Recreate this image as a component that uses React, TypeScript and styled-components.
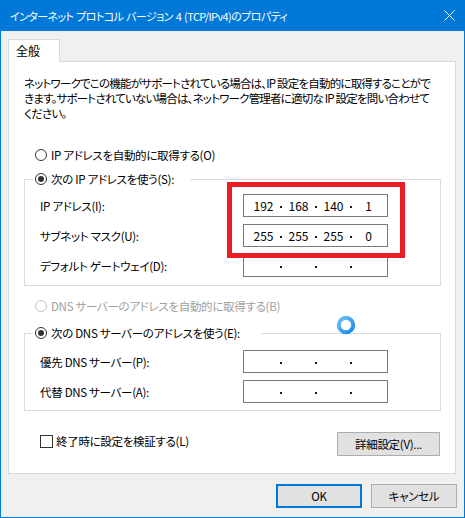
import React from "react";
import styled, { createGlobalStyle } from "styled-components";

const Global = createGlobalStyle`
  html, body { margin: 0; padding: 0; background: #ffffff; }
  body {
    font-family: "Noto Sans CJK JP", "Noto Sans", sans-serif;
    font-size: 11.5px;
    letter-spacing: -0.3px;
    font-feature-settings: "palt" 1;
    color: #000000;
  }
  * { box-sizing: border-box; }
`;

const Window = styled.div`
  width: 465px;
  height: 518px;
  background: #f0f0f0;
  border: 1px solid #0078d7;
  border-top: none;
  display: flex;
  flex-direction: column;
`;

const TitleBar = styled.div`
  height: 31px;
  flex: none;
  background: #0078d7;
  color: #ffffff;
  display: flex;
  align-items: center;
  padding-left: 9px;
`;

const Title = styled.div`
  font-size: 11px;
  letter-spacing: -0.6px;
  word-spacing: 1px;
  line-height: 16px;
  white-space: nowrap;
`;

const CloseButton = styled.div`
  margin-left: auto;
  width: 30px;
  height: 31px;
  display: flex;
  align-items: center;
  justify-content: center;
`;

const Body = styled.div`
  flex: 1;
  padding: 8px 7px 0 7px;
  display: flex;
  flex-direction: column;
`;

const TabStrip = styled.div`
  display: flex;
  height: 22px;
`;

const Tab = styled.div`
  width: 52px;
  height: 23px;
  background: #ffffff;
  border: 1px solid #d9d9d9;
  border-bottom: none;
  padding-left: 7px;
  font-size: 12px;
  letter-spacing: 0;
  line-height: 21px;
  position: relative;
  z-index: 1;
`;

const Panel = styled.div`
  position: relative;
  width: 448px;
  height: 413px;
  background: #ffffff;
  border: 1px solid #d9d9d9;
  padding: 14px 14px 0 15px;
  display: flex;
  flex-direction: column;
`;

const Intro = styled.div`
  line-height: 15px;
  letter-spacing: -0.8px;
  white-space: nowrap;
`;

const Line = styled.span`
  display: block;
`;

const RadioRow = styled.div<{ $top: number; $disabled?: boolean }>`
  display: flex;
  align-items: center;
  gap: 4px;
  height: 16px;
  margin-top: ${(p) => p.$top}px;
  padding-left: 11px;
  color: ${(p) => (p.$disabled ? "#a0a0a0" : "#000000")};
  white-space: nowrap;
`;

const Radio = styled.span<{ $checked?: boolean; $disabled?: boolean }>`
  width: 12px;
  height: 12px;
  flex: none;
  border-radius: 50%;
  border: 1px solid ${(p) => (p.$disabled ? "#c4c4c4" : "#333333")};
  background: #ffffff;
  display: flex;
  align-items: center;
  justify-content: center;
  &::after {
    content: "";
    display: ${(p) => (p.$checked ? "block" : "none")};
    width: 6px;
    height: 6px;
    border-radius: 50%;
    background: #333333;
  }
`;

const Group = styled.fieldset<{ $top: number; $pt: number; $pb: number }>`
  margin: ${(p) => p.$top}px 0 0 0;
  border: 1px solid #dcdcdc;
  padding: ${(p) => p.$pt}px 0 ${(p) => p.$pb}px 15px;
  min-width: 0;
`;

const Legend = styled.legend<{ $width: number }>`
  margin-left: -7px;
  padding: 0 0 0 2px;
  width: ${(p) => p.$width}px;
  height: 16px;
  display: flex;
  align-items: center;
  gap: 4px;
  white-space: nowrap;
`;

const FieldRow = styled.div`
  display: flex;
  align-items: center;
  height: 23px;
  & + & {
    margin-top: 7px;
  }
`;

const FieldLabel = styled.div`
  width: 203px;
  flex: none;
  white-space: nowrap;
`;

const IpBox = styled.div`
  width: 145px;
  height: 23px;
  border: 1px solid #7a7a7a;
  background: #ffffff;
  display: flex;
  align-items: center;
  padding-left: 5px;
`;

const Seg = styled.span`
  width: 29px;
  text-align: center;
  font-size: 12px;
  letter-spacing: 0;
  line-height: 16px;
`;

const Dot = styled.span`
  width: 6px;
  height: 16px;
  display: flex;
  align-items: center;
  justify-content: center;
  &::after {
    content: "";
    width: 2px;
    height: 2px;
    margin-top: 3px;
    background: #1a1a1a;
  }
`;

const Footer = styled.div`
  display: flex;
  justify-content: space-between;
  align-items: flex-start;
  margin-top: 21px;
  padding: 0 1px 0 16px;
`;

const CheckRow = styled.div`
  display: flex;
  align-items: center;
  gap: 3px;
  height: 16px;
  margin-top: 1px;
  white-space: nowrap;
`;

const CheckBox = styled.span`
  width: 13px;
  height: 13px;
  flex: none;
  border: 1px solid #333333;
  background: #ffffff;
`;

const Button = styled.button<{ $width: number; $default?: boolean }>`
  width: ${(p) => p.$width}px;
  height: 24px;
  padding: 0;
  background: #e1e1e1;
  border: ${(p) => (p.$default ? "2px solid #0078d7" : "1px solid #adadad")};
  font-family: inherit;
  font-size: 11.5px;
  letter-spacing: -0.3px;
  font-feature-settings: "palt" 1;
  color: #000000;
  line-height: 16px;
`;

const ButtonBar = styled.div`
  display: flex;
  justify-content: flex-end;
  gap: 9px;
  margin-top: 10px;
`;

const Highlight = styled.div`
  position: absolute;
  left: 218px;
  top: 120px;
  width: 178px;
  height: 76px;
  border: 5px solid #ed1c24;
  pointer-events: none;
`;

const Spinner = styled.svg`
  position: absolute;
  left: 327px;
  top: 253px;
`;

const IpField = ({ values }: { values: string[] }) => (
  <IpBox>
    <Seg>{values[0]}</Seg>
    <Dot />
    <Seg>{values[1]}</Seg>
    <Dot />
    <Seg>{values[2]}</Seg>
    <Dot />
    <Seg>{values[3]}</Seg>
  </IpBox>
);

const empty = ["", "", "", ""];

export default function App() {
  return (
    <>
      <Global />
      <Window>
        <TitleBar>
          <Title>インターネット プロトコル バージョン 4 (TCP/IPv4)のプロパティ</Title>
          <CloseButton>
            <svg width="11" height="11" viewBox="0 0 11 11">
              <path d="M0.5 0.5 L10.5 10.5 M10.5 0.5 L0.5 10.5" stroke="#ffffff" strokeWidth="1" fill="none" />
            </svg>
          </CloseButton>
        </TitleBar>
        <Body>
          <TabStrip>
            <Tab>全般</Tab>
          </TabStrip>
          <Panel>
            <Intro>
              <Line>ネットワークでこの機能がサポートされている場合は、IP 設定を自動的に取得することがで</Line>
              <Line>きます。サポートされていない場合は、ネットワーク管理者に適切な IP 設定を問い合わせて</Line>
              <Line>ください。</Line>
            </Intro>
            <RadioRow $top={26}>
              <Radio />
              IP アドレスを自動的に取得する(O)
            </RadioRow>
            <Group $top={8} $pt={7} $pb={8}>
              <Legend $width={157}>
                <Radio $checked />
                次の IP アドレスを使う(S):
              </Legend>
              <FieldRow>
                <FieldLabel>IP アドレス(I):</FieldLabel>
                <IpField values={["192", "168", "140", "1"]} />
              </FieldRow>
              <FieldRow>
                <FieldLabel>サブネット マスク(U):</FieldLabel>
                <IpField values={["255", "255", "255", "0"]} />
              </FieldRow>
              <FieldRow>
                <FieldLabel>デフォルト ゲートウェイ(D):</FieldLabel>
                <IpField values={empty} />
              </FieldRow>
            </Group>
            <RadioRow $top={12} $disabled>
              <Radio $disabled />
              DNS サーバーのアドレスを自動的に取得する(B)
            </RadioRow>
            <Group $top={11} $pt={9} $pb={7}>
              <Legend $width={228}>
                <Radio $checked />
                次の DNS サーバーのアドレスを使う(E):
              </Legend>
              <FieldRow>
                <FieldLabel>優先 DNS サーバー(P):</FieldLabel>
                <IpField values={empty} />
              </FieldRow>
              <FieldRow>
                <FieldLabel>代替 DNS サーバー(A):</FieldLabel>
                <IpField values={empty} />
              </FieldRow>
            </Group>
            <Footer>
              <CheckRow>
                <CheckBox />
                終了時に設定を検証する(L)
              </CheckRow>
              <Button $width={103}>詳細設定(V)...</Button>
            </Footer>
            <Highlight />
            <Spinner width="20" height="20" viewBox="0 0 20 20">
              <defs>
                <linearGradient id="spin" x1="0" y1="0" x2="1" y2="1">
                  <stop offset="0" stopColor="#6cc0f7" />
                  <stop offset="1" stopColor="#1a88e8" />
                </linearGradient>
              </defs>
              <circle cx="10" cy="10" r="7.2" fill="none" stroke="url(#spin)" strokeWidth="4" />
            </Spinner>
          </Panel>
          <ButtonBar>
            <Button $width={86} $default>OK</Button>
            <Button $width={86}>キャンセル</Button>
          </ButtonBar>
        </Body>
      </Window>
    </>
  );
}
